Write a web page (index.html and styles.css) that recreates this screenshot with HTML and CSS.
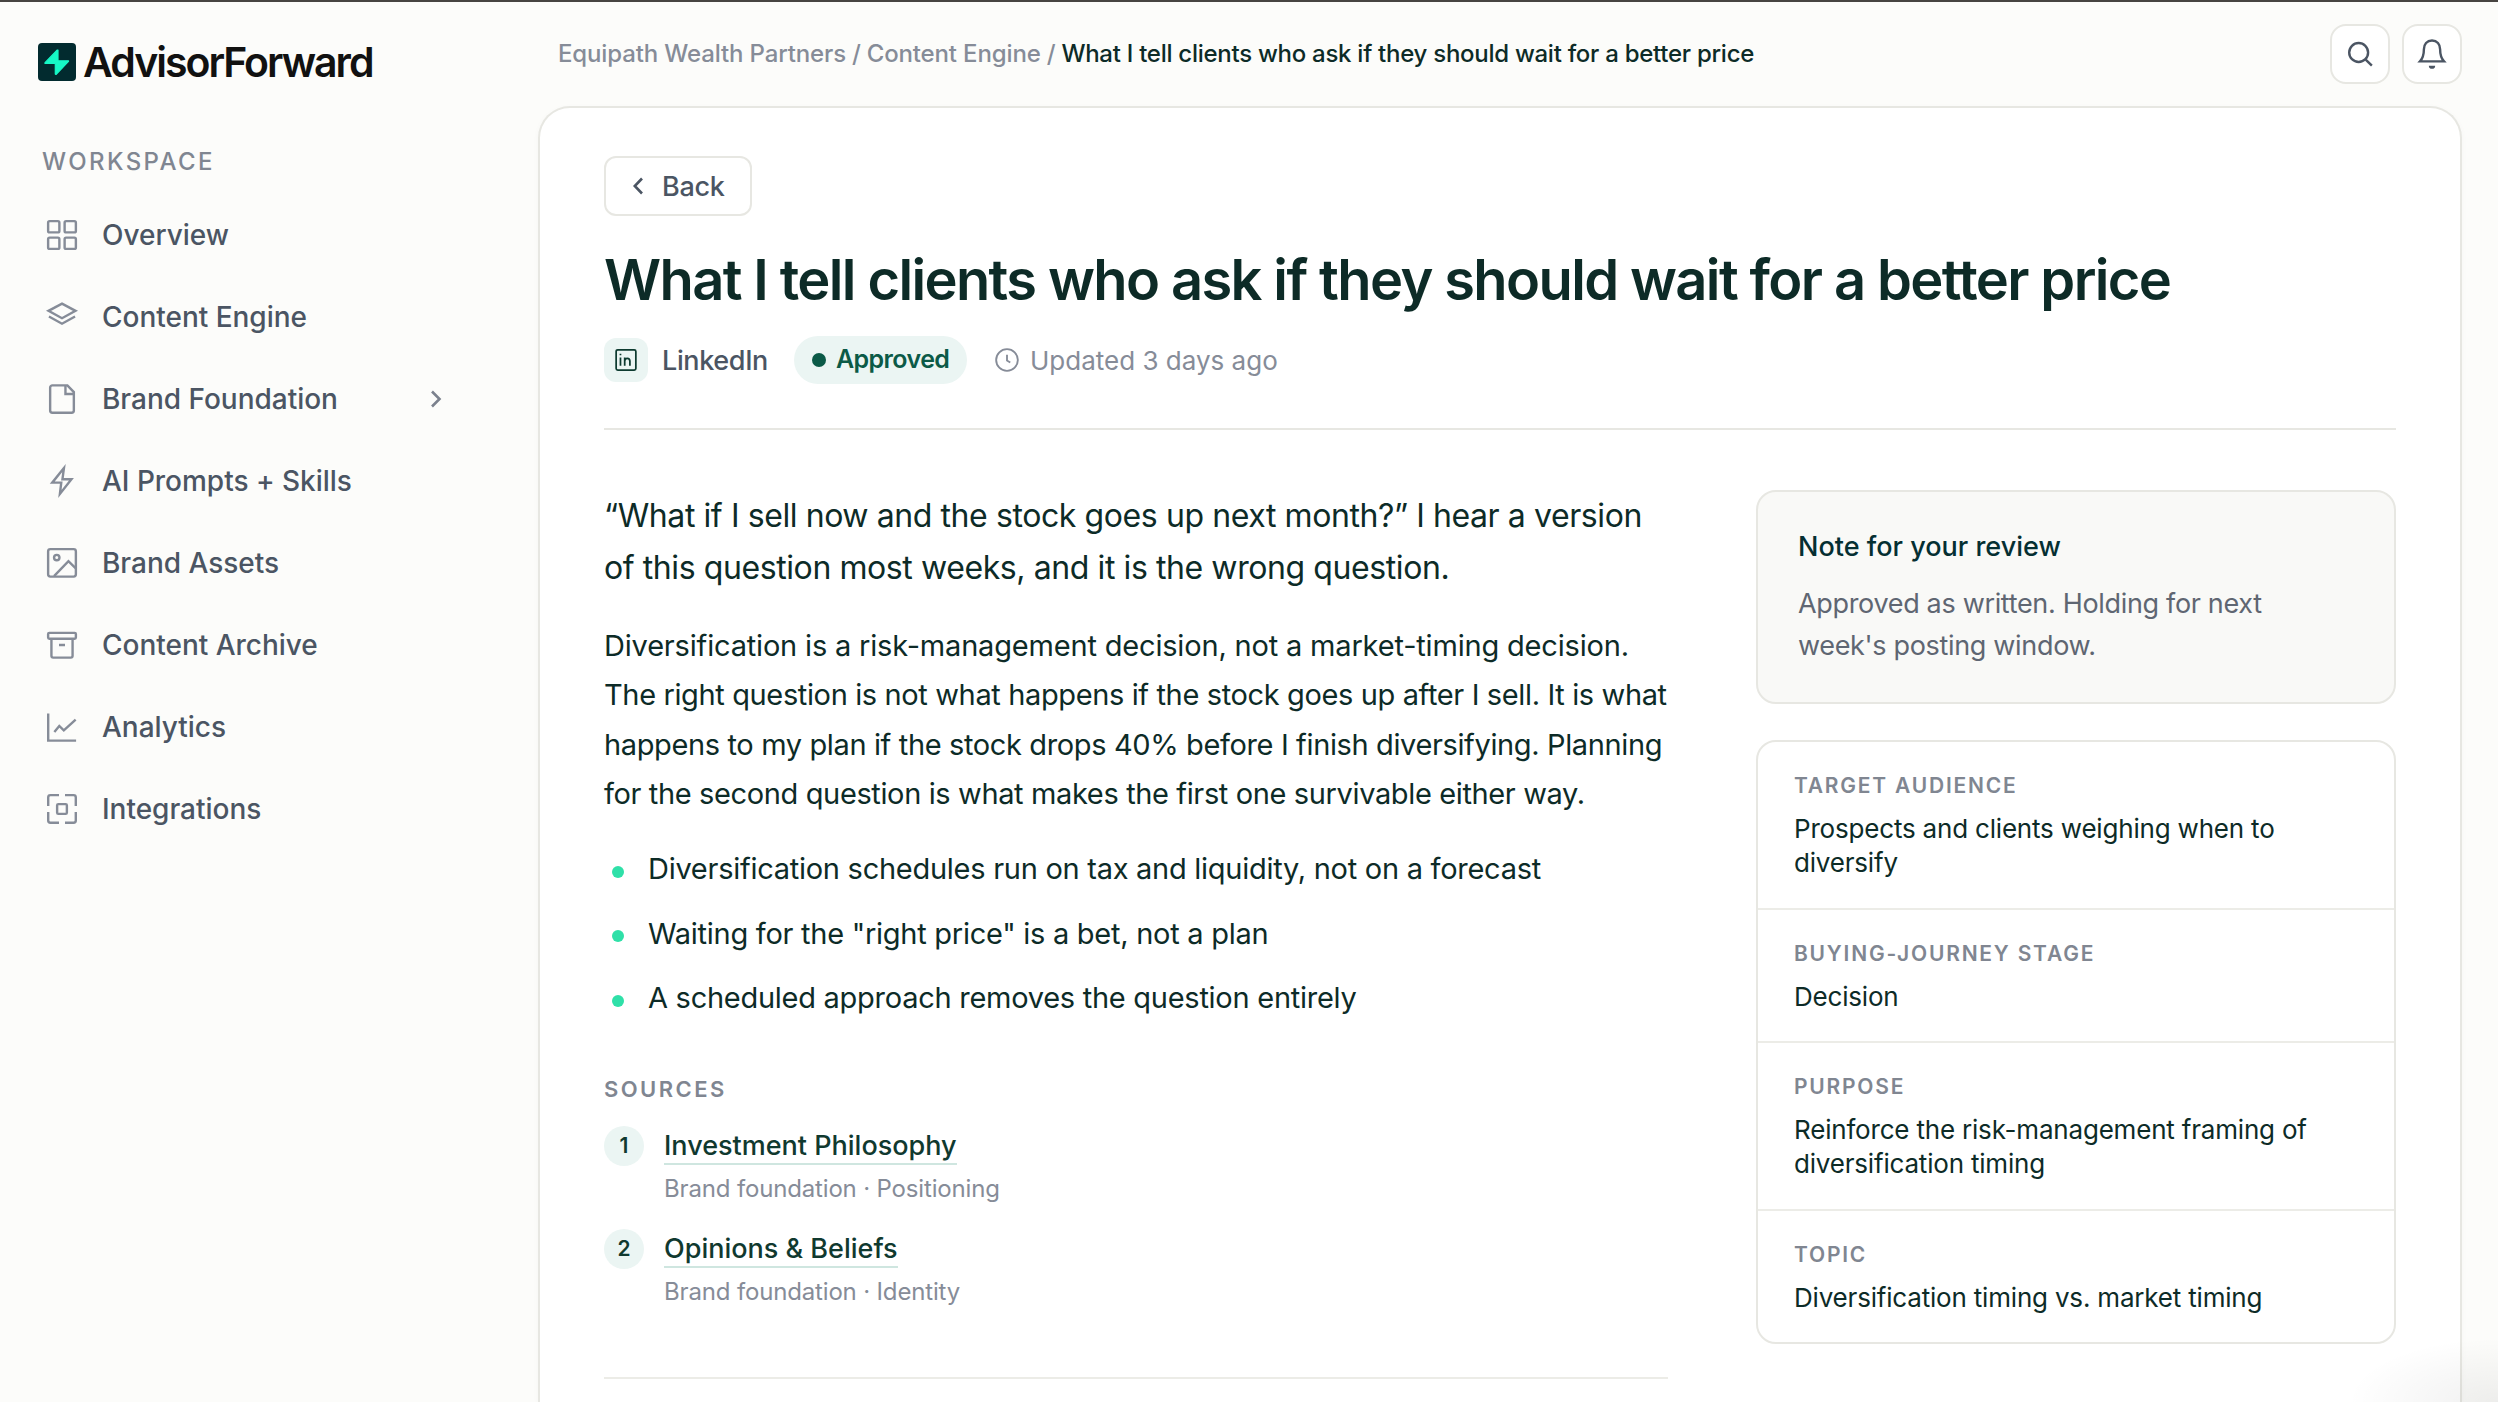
FILE: index.html
```html
<!DOCTYPE html>
<html lang="en">
<head>
  <meta charset="UTF-8">
  <meta name="viewport" content="width=device-width, initial-scale=1.0">
  <title>AdvisorForward</title>
  <link rel="stylesheet" href="styles.css">
</head>
<body>

  <div class="app">
    <aside class="sidebar">
      <div class="logo">
        <svg class="logo-mark" viewBox="0 0 38 38">
          <rect width="38" height="38" rx="4" fill="#022b2f"/>
          <path d="M20 7v10.8h10.5v.6L18 31.5l-.7-.5V20.5H7v-.8L19.3 7z" fill="#16f8c6" stroke="#16f8c6" stroke-width="1.2" stroke-linejoin="round"/>
        </svg>
        <span class="logo-text">AdvisorForward</span>
      </div>

      <div class="nav-label">WORKSPACE</div>
      <nav class="nav">
        <a class="nav-item">
          <svg class="icon" viewBox="0 0 24 24"><rect x="2.75" y="2.75" width="7.5" height="7.5" rx="1"/><rect x="13.75" y="2.75" width="7.5" height="7.5" rx="1"/><rect x="2.75" y="13.75" width="7.5" height="7.5" rx="1"/><rect x="13.75" y="13.75" width="7.5" height="7.5" rx="1"/></svg>
          <span>Overview</span>
        </a>
        <a class="nav-item">
          <svg class="icon" viewBox="0 0 24 24"><path d="M12 3.1l9 4.8-9 4.9-9-4.9zM3.3 11.7l8.7 4.8 8.7-4.8"/></svg>
          <span>Content Engine</span>
        </a>
        <a class="nav-item">
          <svg class="icon" viewBox="0 0 24 24"><path d="M15.6 2.9H5.6a1.5 1.5 0 0 0-1.5 1.5v15.3a1.5 1.5 0 0 0 1.5 1.5h12.8a1.5 1.5 0 0 0 1.5-1.5V7.4zM14.3 3v5.7h5.6"/></svg>
          <span>Brand Foundation</span>
          <svg class="chevron" viewBox="0 0 12 18"><path d="M2 1.5L9.5 9 2 16.5"/></svg>
        </a>
        <a class="nav-item">
          <svg class="icon" viewBox="0 0 24 24"><path d="M13.3 3.4L5.5 13.1h6L10.6 20.6l7.7-9.8h-6z"/></svg>
          <span>AI Prompts + Skills</span>
        </a>
        <a class="nav-item">
          <svg class="icon" viewBox="0 0 24 24"><rect x="2.75" y="2.75" width="18.5" height="18.3" rx="1.5"/><circle cx="8.5" cy="8.4" r="1.8"/><path d="M6.7 20.7L16.3 10.8l4.7 4.6"/></svg>
          <span>Brand Assets</span>
        </a>
        <a class="nav-item">
          <svg class="icon" viewBox="0 0 24 24"><rect x="2.75" y="3.9" width="18.5" height="3.9" rx=".8"/><path d="M4.95 7.8v11.4a1.2 1.2 0 0 0 1.2 1.2h11.7a1.2 1.2 0 0 0 1.2-1.2V7.8M10 12h4"/></svg>
          <span>Content Archive</span>
        </a>
        <a class="nav-item">
          <svg class="icon" viewBox="0 0 24 24"><path d="M2.8 3v18.1h18.6M6.9 15.3l3.3-4 3 2.9 7.9-7.1"/></svg>
          <span>Analytics</span>
        </a>
        <a class="nav-item">
          <svg class="icon" viewBox="0 0 24 24"><path d="M10 2.75H4.3a1.5 1.5 0 0 0-1.5 1.5V10M14 2.75h5.7a1.5 1.5 0 0 1 1.5 1.5V10M2.8 14v5.7a1.5 1.5 0 0 0 1.5 1.5H10M21.2 14v5.7a1.5 1.5 0 0 1-1.5 1.5H14"/><rect x="8.75" y="8.75" width="6.5" height="6.5" rx=".8"/></svg>
          <span>Integrations</span>
        </a>
      </nav>
    </aside>

    <div class="main">
      <header class="topbar">
        <div class="breadcrumb">
          <span>Equipath Wealth Partners</span><span class="slash">/</span><span>Content Engine</span><span class="slash">/</span><strong>What I tell clients who ask if they should wait for a better price</strong>
        </div>
        <div class="topbar-actions">
          <button class="icon-button"><svg class="icon" viewBox="0 0 24 24"><circle cx="11.1" cy="11" r="6.3"/><path d="M15.8 15.7l4.1 4.1"/></svg></button>
          <button class="icon-button"><svg class="icon" viewBox="0 0 24 24"><path d="M12 3C8.6 3 6.6 5.4 6.6 8.8c0 3.5-.6 5.9-2.6 8.1h16c-2-2.2-2.6-4.6-2.6-8.1C17.4 5.4 15.4 3 12 3z"/><path class="clapper" d="M9.9 19.8h4.2a2.1 2.1 0 0 1-4.2 0z"/></svg></button>
        </div>
      </header>

      <main class="panel">
        <button class="back-button">
          <svg class="chevron" viewBox="0 0 12 18"><path d="M10 1.5L2.8 9l7.2 7.5"/></svg>
          Back
        </button>

        <h1>What I tell clients who ask if they should wait for a better price</h1>

        <div class="meta">
          <span class="channel-icon">
            <svg viewBox="0 0 24 24"><rect x="2.9" y="2.7" width="18.2" height="18.6" rx="1.5"/><path d="M6.9 9.6v7.8M6.9 6.2v1.4M10.8 9.6v7.8M10.8 13.2c0-1.7 1-2.8 2.4-2.8s2.4 1 2.4 2.7v4.3"/></svg>
          </span>
          <span class="channel">LinkedIn</span>
          <span class="status"><span class="status-dot"></span>Approved</span>
          <span class="updated">
            <svg viewBox="0 0 24 24"><circle cx="12" cy="12" r="9.3"/><path d="M12 7.5v5l2.8 1.7"/></svg>
            Updated 3 days ago
          </span>
        </div>

        <div class="content">
          <article class="article">
            <p class="lead">“What if I sell now and the stock goes up next month?” I hear a version<br>of this question most weeks, and it is the wrong question.</p>
            <p class="body-text">Diversification is a risk-management decision, not a market-timing decision.<br>The right question is not what happens if the stock goes up after I sell. It is what<br>happens to my plan if the stock drops 40% before I finish diversifying. Planning<br>for the second question is what makes the first one survivable either way.</p>
            <ul class="points">
              <li>Diversification schedules run on tax and liquidity, not on a forecast</li>
              <li>Waiting for the "right price" is a bet, not a plan</li>
              <li>A scheduled approach removes the question entirely</li>
            </ul>

            <h2 class="sources-label">SOURCES</h2>
            <div class="sources">
              <div class="source">
                <span class="source-number">1</span>
                <div class="source-info">
                  <a class="source-title">Investment Philosophy</a>
                  <div class="source-sub">Brand foundation · Positioning</div>
                </div>
              </div>
              <div class="source">
                <span class="source-number">2</span>
                <div class="source-info">
                  <a class="source-title">Opinions &amp; Beliefs</a>
                  <div class="source-sub">Brand foundation · Identity</div>
                </div>
              </div>
            </div>
          </article>

          <aside class="details">
            <div class="note">
              <h3>Note for your review</h3>
              <p>Approved as written. Holding for next<br>week's posting window.</p>
            </div>
            <dl class="facts">
              <div class="fact">
                <dt>TARGET AUDIENCE</dt>
                <dd>Prospects and clients weighing when to<br>diversify</dd>
              </div>
              <div class="fact">
                <dt>BUYING-JOURNEY STAGE</dt>
                <dd>Decision</dd>
              </div>
              <div class="fact">
                <dt>PURPOSE</dt>
                <dd>Reinforce the risk-management framing of<br>diversification timing</dd>
              </div>
              <div class="fact">
                <dt>TOPIC</dt>
                <dd>Diversification timing vs. market timing</dd>
              </div>
            </dl>
          </aside>
        </div>
      </main>
    </div>
  </div>

  <div class="corner-shadow"></div>

</body>
</html>
```
FILE: styles.css
```css
* {
  box-sizing: border-box;
  margin: 0;
  padding: 0;
}

body {
  height: 1402px;
  overflow: hidden;
  border-top: 2px solid #474441;
  background-color: #fcfcfa;
  color: #0d2b27;
  font-family: "Inter", "Liberation Sans", sans-serif;
  -webkit-font-smoothing: antialiased;
}

button {
  font-family: inherit;
  background-color: #fff;
  border: 2px solid #e7e7e2;
}

svg {
  display: block;
  flex-shrink: 0;
  fill: none;
  stroke: currentColor;
  stroke-width: 1.6;
}

.app {
  display: flex;
  height: 1400px;
}

/* Sidebar */
.sidebar {
  width: 538px;
  flex-shrink: 0;
  padding: 41px 96px 0 38px;
}

.logo {
  display: flex;
  align-items: center;
  gap: 7px;
  height: 38px;
}

.logo-mark {
  width: 38px;
  height: 38px;
  stroke: none;
}

.logo-text {
  color: #111;
  font-size: 41px;
  font-weight: 600;
  line-height: 38px;
  letter-spacing: -2px;
}

.nav-label {
  margin: 66px 0 17px 4px;
  color: #808691;
  font-size: 24px;
  font-weight: 500;
  line-height: 30px;
  letter-spacing: 2.4px;
}

.nav-item {
  display: flex;
  align-items: center;
  gap: 22px;
  height: 82px;
  padding-left: 6px;
  color: #4b5563;
  font-size: 28px;
  font-weight: 500;
  letter-spacing: -0.02px;
}

.icon {
  width: 36px;
  height: 36px;
  stroke-miterlimit: 10;
}

.nav-item .icon {
  color: #868c98;
}

.chevron {
  width: 12px;
  height: 18px;
  stroke-width: 2.6;
}

.nav-item .chevron {
  margin-left: auto;
  color: #7b818d;
}

/* Top bar */
.main {
  flex: 1;
  display: flex;
  flex-direction: column;
  padding-right: 36px;
}

.topbar {
  display: flex;
  align-items: center;
  justify-content: space-between;
  height: 104px;
  flex-shrink: 0;
  padding-left: 20px;
}

.breadcrumb {
  display: flex;
  gap: 6px;
  padding-bottom: 2px;
  color: #868c98;
  font-size: 24px;
  font-weight: 500;
  letter-spacing: -0.14px;
  white-space: nowrap;
}

.breadcrumb strong {
  color: #0d2b27;
  font-weight: 500;
  letter-spacing: -0.27px;
}

.topbar-actions {
  display: flex;
  gap: 12px;
}

.icon-button {
  display: flex;
  align-items: center;
  justify-content: center;
  width: 60px;
  height: 60px;
  border-radius: 16px;
  color: #4b5563;
}

.clapper {
  fill: currentColor;
  stroke: none;
}

/* Panel */
.panel {
  flex: 1;
  padding: 48px 64px 0;
  background-color: #fff;
  border: 2px solid #e7e7e2;
  border-bottom: none;
  border-radius: 32px 32px 0 0;
  box-shadow: 0 2px 6px rgba(0, 0, 0, 0.03);
}

.back-button {
  display: flex;
  align-items: center;
  gap: 18px;
  width: 148px;
  height: 60px;
  padding-left: 26px;
  border-radius: 12px;
  color: #4b5563;
  font-size: 27px;
  font-weight: 500;
  letter-spacing: -0.3px;
}

h1 {
  margin-top: 30px;
  font-size: 56px;
  font-weight: 600;
  line-height: 68px;
  letter-spacing: -1.62px;
  white-space: nowrap;
}

.meta {
  display: flex;
  align-items: center;
  height: 94px;
  margin-top: 22px;
  padding-bottom: 44px;
  border-bottom: 2px solid #e7e7e2;
}

.channel-icon {
  display: flex;
  align-items: center;
  justify-content: center;
  width: 44px;
  height: 44px;
  border-radius: 12px;
  background-color: #ebf5f3;
  color: #0d3b30;
}

.channel-icon svg {
  width: 26px;
  height: 26px;
}

.channel {
  width: 132px;
  margin-left: 14px;
  color: #4b5563;
  font-size: 27px;
  font-weight: 500;
  letter-spacing: -0.37px;
}

.status {
  display: flex;
  align-items: center;
  gap: 10px;
  width: 173px;
  height: 48px;
  padding: 0 0 2px 18px;
  border-radius: 24px;
  background-color: #ebf5f3;
  color: #0b5a47;
  font-size: 25px;
  font-weight: 600;
  letter-spacing: -0.6px;
}

.status-dot {
  width: 14px;
  height: 14px;
  margin-top: 2px;
  border-radius: 50%;
  background-color: #0b5a47;
}

.updated {
  display: flex;
  align-items: center;
  gap: 9px;
  margin-left: 26px;
  color: #868c98;
  font-size: 26px;
}

.updated svg {
  width: 28px;
  height: 28px;
}

.content {
  display: grid;
  grid-template-columns: 1064px 640px;
  gap: 88px;
  align-items: start;
  padding-top: 60px;
}

/* Article */
.article {
  white-space: nowrap;
  border-bottom: 2px solid #ecece7;
}

.lead {
  font-size: 32px;
  line-height: 52px;
  letter-spacing: -0.41px;
}

.body-text {
  margin-top: 27px;
  font-size: 29px;
  line-height: 49.3px;
  letter-spacing: -0.37px;
}

.body-text::first-line {
  letter-spacing: -0.18px;
}

.points {
  display: flex;
  flex-direction: column;
  gap: 18px;
  margin-top: 28px;
  list-style: none;
  font-size: 29px;
  line-height: 46.4px;
  letter-spacing: -0.27px;
}

.points li {
  display: flex;
  align-items: center;
  gap: 24px;
  padding-left: 8px;
}

.points li::before {
  content: "";
  width: 12px;
  height: 12px;
  margin-top: 5px;
  border-radius: 50%;
  background-color: #2fe0a8;
}

.sources-label {
  margin: 54px 0 23px;
  color: #808691;
  font-size: 22px;
  font-weight: 600;
  line-height: 28px;
  letter-spacing: 2.45px;
}

.sources {
  display: flex;
  flex-direction: column;
  gap: 25px;
  padding-bottom: 70px;
}

.source {
  display: flex;
  gap: 20px;
}

.source-number {
  width: 40px;
  height: 40px;
  border-radius: 50%;
  background-color: #ebf5f3;
  color: #10392f;
  font-size: 21px;
  font-weight: 600;
  line-height: 40px;
  text-align: center;
}

.source-info {
  padding-top: 3px;
}

.source-title {
  display: inline-block;
  border-bottom: 2px solid #cfe6e0;
  color: #10392f;
  font-size: 27px;
  font-weight: 500;
  line-height: 34px;
  vertical-align: top;
}

.source-sub {
  margin-top: 9px;
  color: #868c98;
  font-size: 24px;
  line-height: 30px;
  letter-spacing: -0.16px;
}

/* Right column */
.details {
  display: flex;
  flex-direction: column;
  gap: 36px;
  white-space: nowrap;
}

.note {
  height: 214px;
  padding: 38px 40px 0;
  border: 2px solid #e7e7e2;
  border-radius: 20px;
  background-color: #f9f9f7;
}

.note h3 {
  color: #052f32;
  font-size: 27px;
  font-weight: 500;
  line-height: 34px;
}

.note p {
  margin-top: 19px;
  color: #5f6672;
  font-size: 27px;
  line-height: 42px;
  letter-spacing: -0.33px;
}

.facts {
  border: 2px solid #e7e7e2;
  border-radius: 20px;
}

.fact {
  padding: 31px 36px 27.5px;
  border-bottom: 2px solid #ecece7;
}

.fact:last-child {
  border-bottom: none;
}

.fact dt {
  color: #808691;
  font-size: 21px;
  font-weight: 600;
  line-height: 26px;
  letter-spacing: 1.78px;
}

.fact dd {
  margin-top: 13px;
  font-size: 26px;
  line-height: 34px;
  letter-spacing: -0.19px;
}

.corner-shadow {
  position: absolute;
  right: 0;
  bottom: 0;
  width: 150px;
  height: 64px;
  background: radial-gradient(ellipse 150px 64px at 100% 100%, rgba(0, 0, 0, 0.06), transparent);
}
```
